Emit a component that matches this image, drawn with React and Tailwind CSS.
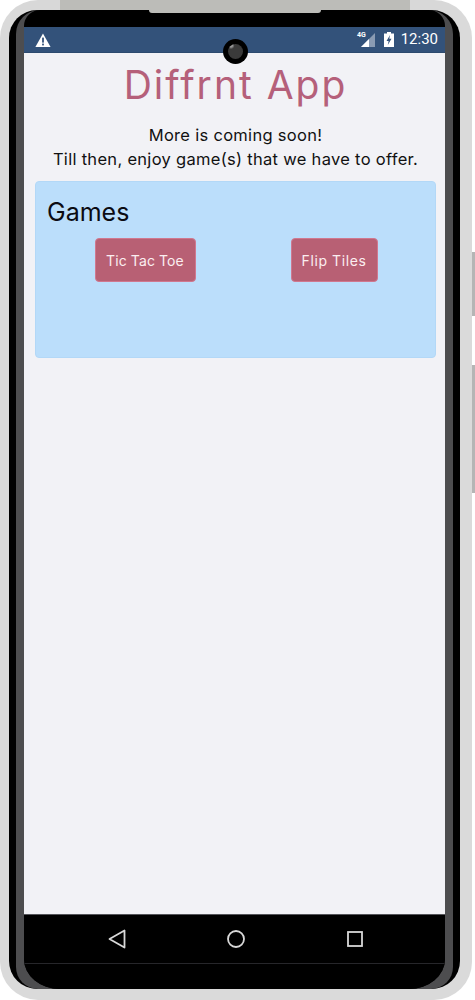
import React from "react";

const font = "font-['Inter','Open_Sans',sans-serif]";

function StatusBar() {
  return (
    <div className="flex h-[26px] items-center justify-between border-b border-[#2d4a6e] bg-[#33527a] pl-[11px] pr-[7px]">
      <svg width="16" height="14" viewBox="0 0 16 14">
        <path d="M8 0.5 L15.6 14 H0.4 Z" fill="#fff" />
        <rect x="7.1" y="4.6" width="1.8" height="5" fill="#33527a" />
        <rect x="7.1" y="10.6" width="1.8" height="1.8" fill="#33527a" />
      </svg>
      <div className="flex items-center gap-[9px]">
        <svg width="17" height="15" viewBox="0 0 17 15" className="overflow-visible">
          <path d="M17 1 V15 H3 Z" fill="#8a9bb3" />
          <path d="M11 7 V15 H3 Z" fill="#fff" />
          <text x="-1" y="5" fontFamily="Roboto, sans-serif" fontSize="7" fontWeight="700" fill="#fff">
            4G
          </text>
        </svg>
        <div className="flex items-center gap-[7px]">
          <svg width="10" height="15" viewBox="0 0 10 15">
            <path d="M3 0 H7 V1.5 H10 V15 H0 V1.5 H3 Z" fill="#fff" />
            <path d="M6 3 L2.5 9 H4.6 L3.8 13 L7.5 6.8 H5.3 Z" fill="#33527a" />
          </svg>
          <span className="font-['Roboto',sans-serif] text-[15px] leading-none text-white">12:30</span>
        </div>
      </div>
    </div>
  );
}

function GameButton({ children, className }) {
  return (
    <button
      className={`h-[44px] rounded-[4px] border border-[#d0788f] bg-[#b86074] text-[14px] text-[#fbeef0] ${font} ${className}`}
    >
      {children}
    </button>
  );
}

function NavBar() {
  return (
    <div className="h-[75px] border-t border-[#55555a] bg-black">
      <div className="flex h-[49px] items-center justify-between border-b border-[#26262a] pl-[84px] pr-[82px]">
        <svg width="18" height="20" viewBox="0 0 18 20">
          <path d="M16.5 1.5 V18.5 L1.5 10 Z" fill="none" stroke="#d8d8d8" strokeWidth="1.8" strokeLinejoin="round" />
        </svg>
        <svg width="18" height="18" viewBox="0 0 18 18" className="mr-[2px]">
          <circle cx="9" cy="9" r="8" fill="none" stroke="#d8d8d8" strokeWidth="1.8" />
        </svg>
        <svg width="16" height="16" viewBox="0 0 16 16">
          <rect x="1" y="1" width="14" height="14" fill="none" stroke="#d8d8d8" strokeWidth="1.8" />
        </svg>
      </div>
    </div>
  );
}

export default function App() {
  return (
    <div className="relative flex h-[1000px] w-[475px] overflow-hidden bg-white">
      {/* phone body */}
      <div className="h-[1000px] w-[472px] rounded-[38px] bg-[#dadada] bg-[linear-gradient(to_right,#d8d8d8_60px,#bcbcb8_60px,#bcbcb8_410px,#d8d8d8_410px)] bg-[length:100%_10px] bg-no-repeat pb-[11px] pl-[9px] pr-[12px] pt-[10px]">
        <div className="h-full rounded-[28px] bg-black px-[7px]">
          <div className="h-full rounded-t-[24px] rounded-b-[22px] bg-[#4d4d4f] px-[8px]">
            <div className="h-full overflow-hidden rounded-t-[16px] rounded-bl-[36px_30px] rounded-br-[36px_30px] bg-black">
              <div className="flex h-[17px] justify-center">
                <div className="h-[3px] w-[172px] rounded-b-[3px] bg-[#bcbcb8]" />
              </div>
              <StatusBar />
              <div className={`h-[861px] bg-[#f2f2f6] pl-[11px] pr-[9px] ${font}`}>
                <h1 className="pt-[6px] text-center text-[39px] leading-[52px] tracking-[2px] text-[#b5607a]">Diffrnt App</h1>
                <p className="mt-[12px] text-center text-[16.5px] leading-[24px] tracking-[0.3px] text-[#111]">
                  More is coming soon!
                  <br />
                  Till then, enjoy game(s) that we have to offer.
                </p>
                <div className="mt-[10px] h-[177px] rounded-[4px] border border-[#b3d8f7] bg-[#bbdefb] py-[11px] pl-[11px] pr-[10px]">
                  <h2 className="pt-[1px] text-[25px] leading-[36px] text-[#0b0b12]">Games</h2>
                  <div className="mt-[8px] flex justify-around">
                    <GameButton className="w-[101px] tracking-[0.1px]">Tic Tac Toe</GameButton>
                    <GameButton className="w-[87px] tracking-[0.6px]">Flip Tiles</GameButton>
                  </div>
                </div>
              </div>
              <NavBar />
            </div>
          </div>
        </div>
      </div>

      {/* side buttons */}
      <div className="flex w-[3px] flex-col gap-[49px] pt-[252px]">
        <div className="h-[64px] bg-[#b5b5b5]" />
        <div className="h-[128px] bg-[#b5b5b5]" />
      </div>

      {/* camera */}
      <div className="absolute left-[223px] top-[39px] flex h-[25px] w-[25px] items-center justify-center rounded-full bg-black">
        <div className="h-[15px] w-[15px] rounded-full bg-[radial-gradient(circle_at_20%_10%,#9a9a9a_0,#9a9a9a_8%,#3a3a3a_20%)]" />
      </div>
    </div>
  );
}
